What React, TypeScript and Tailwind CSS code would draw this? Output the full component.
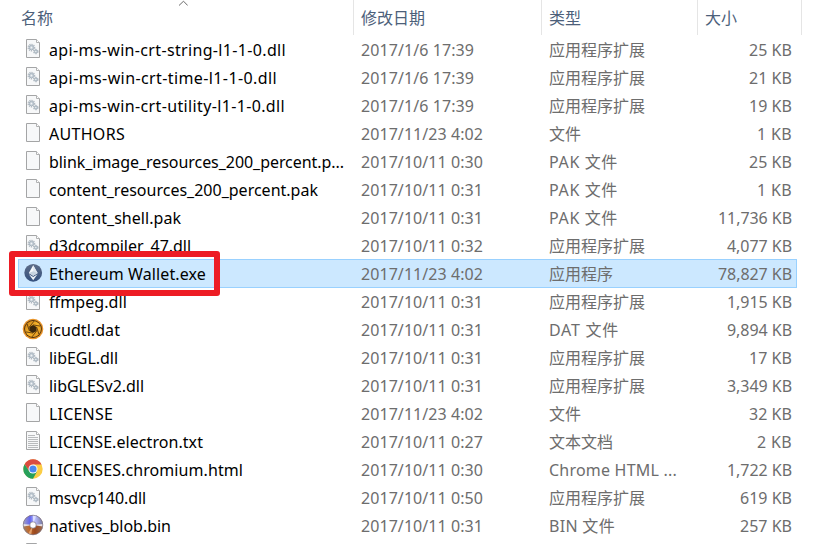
import { useLayoutEffect, useRef, useState } from "react";

type Kind = "dll" | "blank" | "text" | "eth" | "shutter" | "chrome" | "disc";

interface FileRow {
  icon: Kind;
  name: string;
  nameWidth: number;
  date: string;
  dateWidth: number;
  type: string;
  typeWidth: number;
  size: string;
  sizeWidth: number;
  selected?: boolean;
}

const file = (
  icon: Kind,
  name: string,
  nameWidth: number,
  date: string,
  dateWidth: number,
  type: string,
  typeWidth: number,
  size: string,
  sizeWidth: number,
  selected = false,
): FileRow => ({ icon, name, nameWidth, date, dateWidth, type, typeWidth, size, sizeWidth, selected });

const files: FileRow[] = [
  file("dll", "api-ms-win-crt-string-l1-1-0.dll", 237, "2017/1/6 17:39", 113, "应用程序扩展", 96, "25 KB", 43),
  file("dll", "api-ms-win-crt-time-l1-1-0.dll", 228, "2017/1/6 17:39", 113, "应用程序扩展", 96, "21 KB", 43),
  file("dll", "api-ms-win-crt-utility-l1-1-0.dll", 236, "2017/1/6 17:39", 113, "应用程序扩展", 96, "19 KB", 43),
  file("blank", "AUTHORS", 76, "2017/11/23 4:02", 122, "文件", 32, "1 KB", 35),
  file("blank", "blink_image_resources_200_percent.p...", 295, "2017/10/11 0:30", 122, "PAK 文件", 69, "25 KB", 43),
  file("blank", "content_resources_200_percent.pak", 269, "2017/10/11 0:31", 122, "PAK 文件", 69, "1 KB", 35),
  file("blank", "content_shell.pak", 132, "2017/10/11 0:31", 122, "PAK 文件", 69, "11,736 KB", 74),
  file("dll", "d3dcompiler_47.dll", 142, "2017/10/11 0:32", 122, "应用程序扩展", 96, "4,077 KB", 65),
  file("eth", "Ethereum Wallet.exe", 157, "2017/11/23 4:02", 122, "应用程序", 64, "78,827 KB", 74, true),
  file("dll", "ffmpeg.dll", 78, "2017/10/11 0:31", 122, "应用程序扩展", 96, "1,915 KB", 65),
  file("shutter", "icudtl.dat", 71, "2017/10/11 0:31", 122, "DAT 文件", 70, "9,894 KB", 65),
  file("dll", "libEGL.dll", 69, "2017/10/11 0:31", 122, "应用程序扩展", 96, "17 KB", 43),
  file("dll", "libGLESv2.dll", 95, "2017/10/11 0:31", 122, "应用程序扩展", 96, "3,349 KB", 65),
  file("blank", "LICENSE", 64, "2017/11/23 4:02", 122, "文件", 32, "32 KB", 43),
  file("text", "LICENSE.electron.txt", 154, "2017/10/11 0:27", 122, "文本文档", 64, "2 KB", 35),
  file("chrome", "LICENSES.chromium.html", 194, "2017/10/11 0:30", 122, "Chrome HTML ...", 128, "1,722 KB", 65),
  file("dll", "msvcp140.dll", 97, "2017/10/11 0:50", 122, "应用程序扩展", 96, "619 KB", 52),
  file("disc", "natives_blob.bin", 122, "2017/10/11 0:31", 122, "BIN 文件", 66, "257 KB", 52),
];

/** Spreads a label's letters evenly so that it fills the given width. */
function Fit({ text, width }: { text: string; width: number }) {
  const ref = useRef<HTMLSpanElement>(null);
  const [spacing, setSpacing] = useState(0);
  useLayoutEffect(() => {
    const el = ref.current;
    if (!el) return;
    el.style.letterSpacing = "0px";
    const value = (width - el.getBoundingClientRect().width) / text.length;
    el.style.letterSpacing = `${value}px`;
    setSpacing(value);
  }, [text, width]);
  return (
    <span ref={ref} className="inline-block whitespace-pre" style={{ letterSpacing: `${spacing}px` }}>
      {text}
    </span>
  );
}

function Gear({ x, y, r }: { x: number; y: number; r: number }) {
  return (
    <g transform={`translate(${x} ${y})`}>
      <circle r={r} fill="none" stroke="#b4bcc4" strokeWidth="1.4" strokeDasharray="1.3 0.8" />
      <circle r={r * 0.7} fill="#c9d2da" stroke="#a3b0bb" strokeWidth="0.9" />
      <circle r={r * 0.25} fill="#f3f5f6" />
    </g>
  );
}

function Page({ kind }: { kind: Kind }) {
  return (
    <svg width="14" height="19" viewBox="0 0 14 19" className="shrink-0">
      <path d="M.5.5h10l3 3v15H.5z" fill="#f7f8f9" stroke="#a4a5a6" />
      <path d="M10.5.5v3h3" fill="#fff" stroke="#b1b2b3" />
      {kind === "dll" && (
        <>
          <Gear x={5.4} y={8.6} r={3.2} />
          <Gear x={9.8} y={12.5} r={2.1} />
        </>
      )}
      {kind === "text" && (
        <path d="M2 4.5h7M2 6.5h10M2 8.5h10M2 10.5h10M2 12.5h10M2 14.5h10M2 16.5h10" stroke="#b9bbbd" />
      )}
    </svg>
  );
}

function Ethereum() {
  return (
    <svg width="20" height="20" viewBox="0 0 20 20">
      <defs>
        <linearGradient id="eth" x2="0" y2="1">
          <stop stopColor="#5d6c87" />
          <stop offset="1" stopColor="#35527f" />
        </linearGradient>
      </defs>
      <circle cx="10.2" cy="9.8" r="8.9" fill="url(#eth)" />
      <path d="M10.2 2.2 5.8 10l4.4 2.8 4.4-2.8z" fill="#f5f8fb" />
      <path d="M10.2 2.2V12.8l4.4-2.8z" fill="#dfe7ef" />
      <path d="m5.9 11.3 4.3 6 4.3-6-4.3 2.7z" fill="#edf2f7" />
      <path d="m5.8 10 4.4-1.8 4.4 1.8-4.4 2.8z" fill="#c8d4e0" />
    </svg>
  );
}

function Shutter() {
  return (
    <svg width="22" height="22" viewBox="0 0 22 22">
      <defs>
        <linearGradient id="amber" x2="1" y2="1">
          <stop stopColor="#c77d14" />
          <stop offset=".5" stopColor="#f8b52c" />
          <stop offset="1" stopColor="#e0931f" />
        </linearGradient>
      </defs>
      <circle cx="11" cy="11" r="10.3" fill="#e8942a" />
      <circle cx="11" cy="11" r="8.9" fill="#4a2e0e" />
      <circle cx="11" cy="11" r="8" fill="url(#amber)" />
      <path d="m11 6.9 3.6 2.1v4L11 15.1 7.4 13V9z" fill="#3a260c" />
      <path
        d="M7.4 9 12 3.1M11 6.9l7.2 1.2M14.6 9l2.3 7.2M14.6 13 10 18.9M11 15.1l-7.2-1.2M7.4 13 5.1 5.8"
        stroke="#5b390f"
        strokeWidth=".9"
      />
    </svg>
  );
}

function Chrome() {
  return (
    <svg width="20" height="20" viewBox="0 0 20 20">
      <circle cx="10" cy="10" r="9.7" fill="#fbcd45" />
      <path d="M1.6 5.15A9.7 9.7 0 0 1 18.4 5.15L18.55 5.6H10L6.2 12.2z" fill="#da4c40" />
      <path d="M1.6 5.15A9.7 9.7 0 0 0 10 19.7l4-7.3-7.8-.1z" fill="#26a05b" />
      <circle cx="10" cy="10" r="4.5" fill="#fff" />
      <circle cx="10" cy="10" r="3.6" fill="#4a88ee" />
    </svg>
  );
}

function Disc() {
  return (
    <svg width="22" height="22" viewBox="0 0 22 22">
      <defs>
        <linearGradient id="sky" x2="1" y2="0">
          <stop stopColor="#a5a3c4" />
          <stop offset=".35" stopColor="#6365ee" />
          <stop offset=".6" stopColor="#b9beff" />
          <stop offset="1" stopColor="#74779d" />
        </linearGradient>
        <linearGradient id="copper" x2="1" y2="0">
          <stop stopColor="#9d8069" />
          <stop offset=".3" stopColor="#c06a2c" />
          <stop offset=".6" stopColor="#9b481d" />
          <stop offset="1" stopColor="#9a6c50" />
        </linearGradient>
      </defs>
      <circle cx="11" cy="11" r="10" fill="url(#copper)" />
      <path d="M1 11a10 10 0 0 1 20 0z" fill="url(#sky)" />
      <path d="M11 11 1.1 9.9v2.6zM11 11l9.8-1v2.4z" fill="#e4dfe4" />
      <path d="M11 11 10.8 1.1h3.6z" fill="#dcdfff" />
      <path d="M11 11 6.3 19.6l2.8 1.1z" fill="#e2a06b" />
      <circle cx="11" cy="11" r="9.8" fill="none" stroke="#7d7686" strokeWidth=".7" />
      <circle cx="11" cy="11" r="3.5" fill="#8d8994" />
      <circle cx="11" cy="11" r="2.7" fill="#fff" />
    </svg>
  );
}

function FileIcon({ kind }: { kind: Kind }) {
  switch (kind) {
    case "eth":
      return <Ethereum />;
    case "shutter":
      return <Shutter />;
    case "chrome":
      return <Chrome />;
    case "disc":
      return <Disc />;
    default:
      return <Page kind={kind} />;
  }
}

function Row({ row }: { row: FileRow }) {
  const frame = row.selected
    ? "-mt-px h-[29px] border-[#99d1ff] bg-[#cce8ff] pt-px"
    : "h-7 border-transparent";
  return (
    <div className={`ml-[18px] flex w-[779px] items-center border-x ${row.selected ? "border-y" : ""} ${frame}`}>
      <div className="mr-[2px] flex w-[28px] shrink-0 justify-center pb-[3px]">
        <FileIcon kind={row.icon} />
      </div>
      <div className="w-[312px] shrink-0 text-black">
        <Fit text={row.name} width={row.nameWidth} />
      </div>
      <div className="w-[188px] shrink-0">
        <Fit text={row.date} width={row.dateWidth} />
      </div>
      <div className="w-[140px] shrink-0">
        <Fit text={row.type} width={row.typeWidth} />
      </div>
      <div className="flex grow justify-end pr-[4px]">
        <Fit text={row.size} width={row.sizeWidth} />
      </div>
    </div>
  );
}

export default function App() {
  return (
    <div className="relative h-[544px] w-[814px] overflow-hidden bg-white font-['Noto_Sans','Noto_Sans_CJK_SC',sans-serif] text-[16px] leading-6 text-[#6d6d6d]">
      <div className="flex h-9 pb-px text-[#4c607a]">
        <div className="w-[354px] border-r border-[#e5e5e5] pt-[6px] pl-[21px]">名称</div>
        <div className="w-[188px] border-r border-[#e5e5e5] pt-[6px] pl-[7px]">修改日期</div>
        <div className="w-[156px] border-r border-[#e5e5e5] pt-[6px] pl-[7px]">类型</div>
        <div className="w-[104px] border-r border-[#e5e5e5] pt-[6px] pl-[7px]">大小</div>
      </div>
      <svg width="10" height="6" viewBox="0 0 10 6" className="absolute top-0 left-[178px]">
        <path d="m1 5.5 4.5-4.3L9.7 5.5" fill="none" stroke="#6a6a6a" />
      </svg>
      {files.map((row) => (
        <Row key={row.name} row={row} />
      ))}
      <div className="ml-[18px] flex h-7 w-[779px] items-center border-x border-transparent">
        <div className="flex w-[28px] justify-center pb-[3px]">
          <Page kind="blank" />
        </div>
      </div>
      <div className="absolute top-[251px] left-[9px] h-[45px] w-[211px] rounded-[3px] border-[6px] border-[#ed1c24]" />
    </div>
  );
}
